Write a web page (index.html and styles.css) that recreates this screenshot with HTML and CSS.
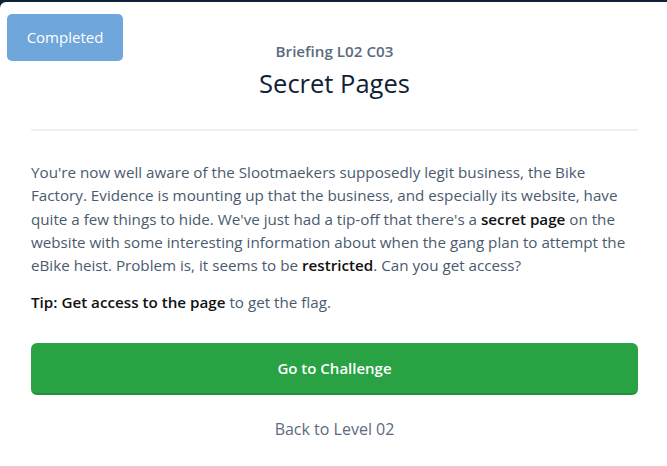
FILE: index.html
```html
<!DOCTYPE html>
<html>
<head>
<meta charset="utf-8">
<link rel="stylesheet" href="styles.css">
</head>
<body>
<div class="modal">
  <span class="badge">Completed</span>
  <header class="head">
    <div class="sub">Briefing L02 C03</div>
    <h1 class="title">Secret Pages</h1>
  </header>
  <div class="body">
    <p class="text">You're now well aware of the Slootmaekers supposedly legit business, the Bike Factory. Evidence is mounting up that the business, and especially its website, have quite a few things to hide. We've just had a tip-off that there's a <b>secret page</b> on the website with some interesting information about when the gang plan to attempt the eBike heist. Problem is, it seems to be <b>restricted</b>. Can you get access?</p>
    <p class="tip"><b>Tip: Get access to the page</b> to get the flag.</p>
    <a class="go">Go to Challenge</a>
    <a class="back">Back to Level 02</a>
  </div>
</div>
</body>
</html>
```
FILE: styles.css
```css
html, body { margin: 0; padding: 0; }
body {
  background: #0f2137;
  font-family: "Open Sans", "Liberation Sans", sans-serif;
  height: 466px;
  overflow: hidden;
}
.modal {
  position: relative;
  margin-top: 2px;
  background: #fff;
  border-radius: 6px 0 0 0;
  height: 464px;
  padding: 0 29px 0 31px;
}
.badge {
  position: absolute;
  left: 7px;
  top: 12px;
  width: 116px;
  height: 47px;
  line-height: 47px;
  text-align: center;
  background: #6fa6dc;
  color: #fff;
  border-radius: 5px;
  font-size: 15px;
  font-weight: 500;
}
.head {
  text-align: center;
  padding-top: 39px;
  padding-bottom: 31px;
  border-bottom: 2px solid #eef0f4;
}
.sub {
  font-size: 15.2px;
  font-weight: 600;
  color: #5a6b80;
  line-height: 20px;
}
.title {
  margin: 7px 0 0;
  font-size: 25.5px;
  font-weight: 500;
  color: #0f2137;
  line-height: 30px;
}
.body { padding-top: 30px; }
.text, .tip {
  margin: 0;
  font-size: 15.2px;
  line-height: 23.3px;
  color: #4a5a6e;
}
.text b, .tip b { color: #111; font-weight: 600; }
.tip { margin-top: 14px; }
.go {
  display: block;
  margin-top: 28px;
  height: 52px;
  line-height: 50px;
  box-sizing: border-box;
  border-bottom: 2px solid #23903b;
  background: #28a243;
  border-radius: 6px;
  color: #fff;
  text-align: center;
  font-size: 15px;
  font-weight: 600;
}
.back {
  display: block;
  margin-top: 23px;
  text-align: center;
  color: #5a6b80;
  font-size: 16px;
  font-weight: 500;
}
```
